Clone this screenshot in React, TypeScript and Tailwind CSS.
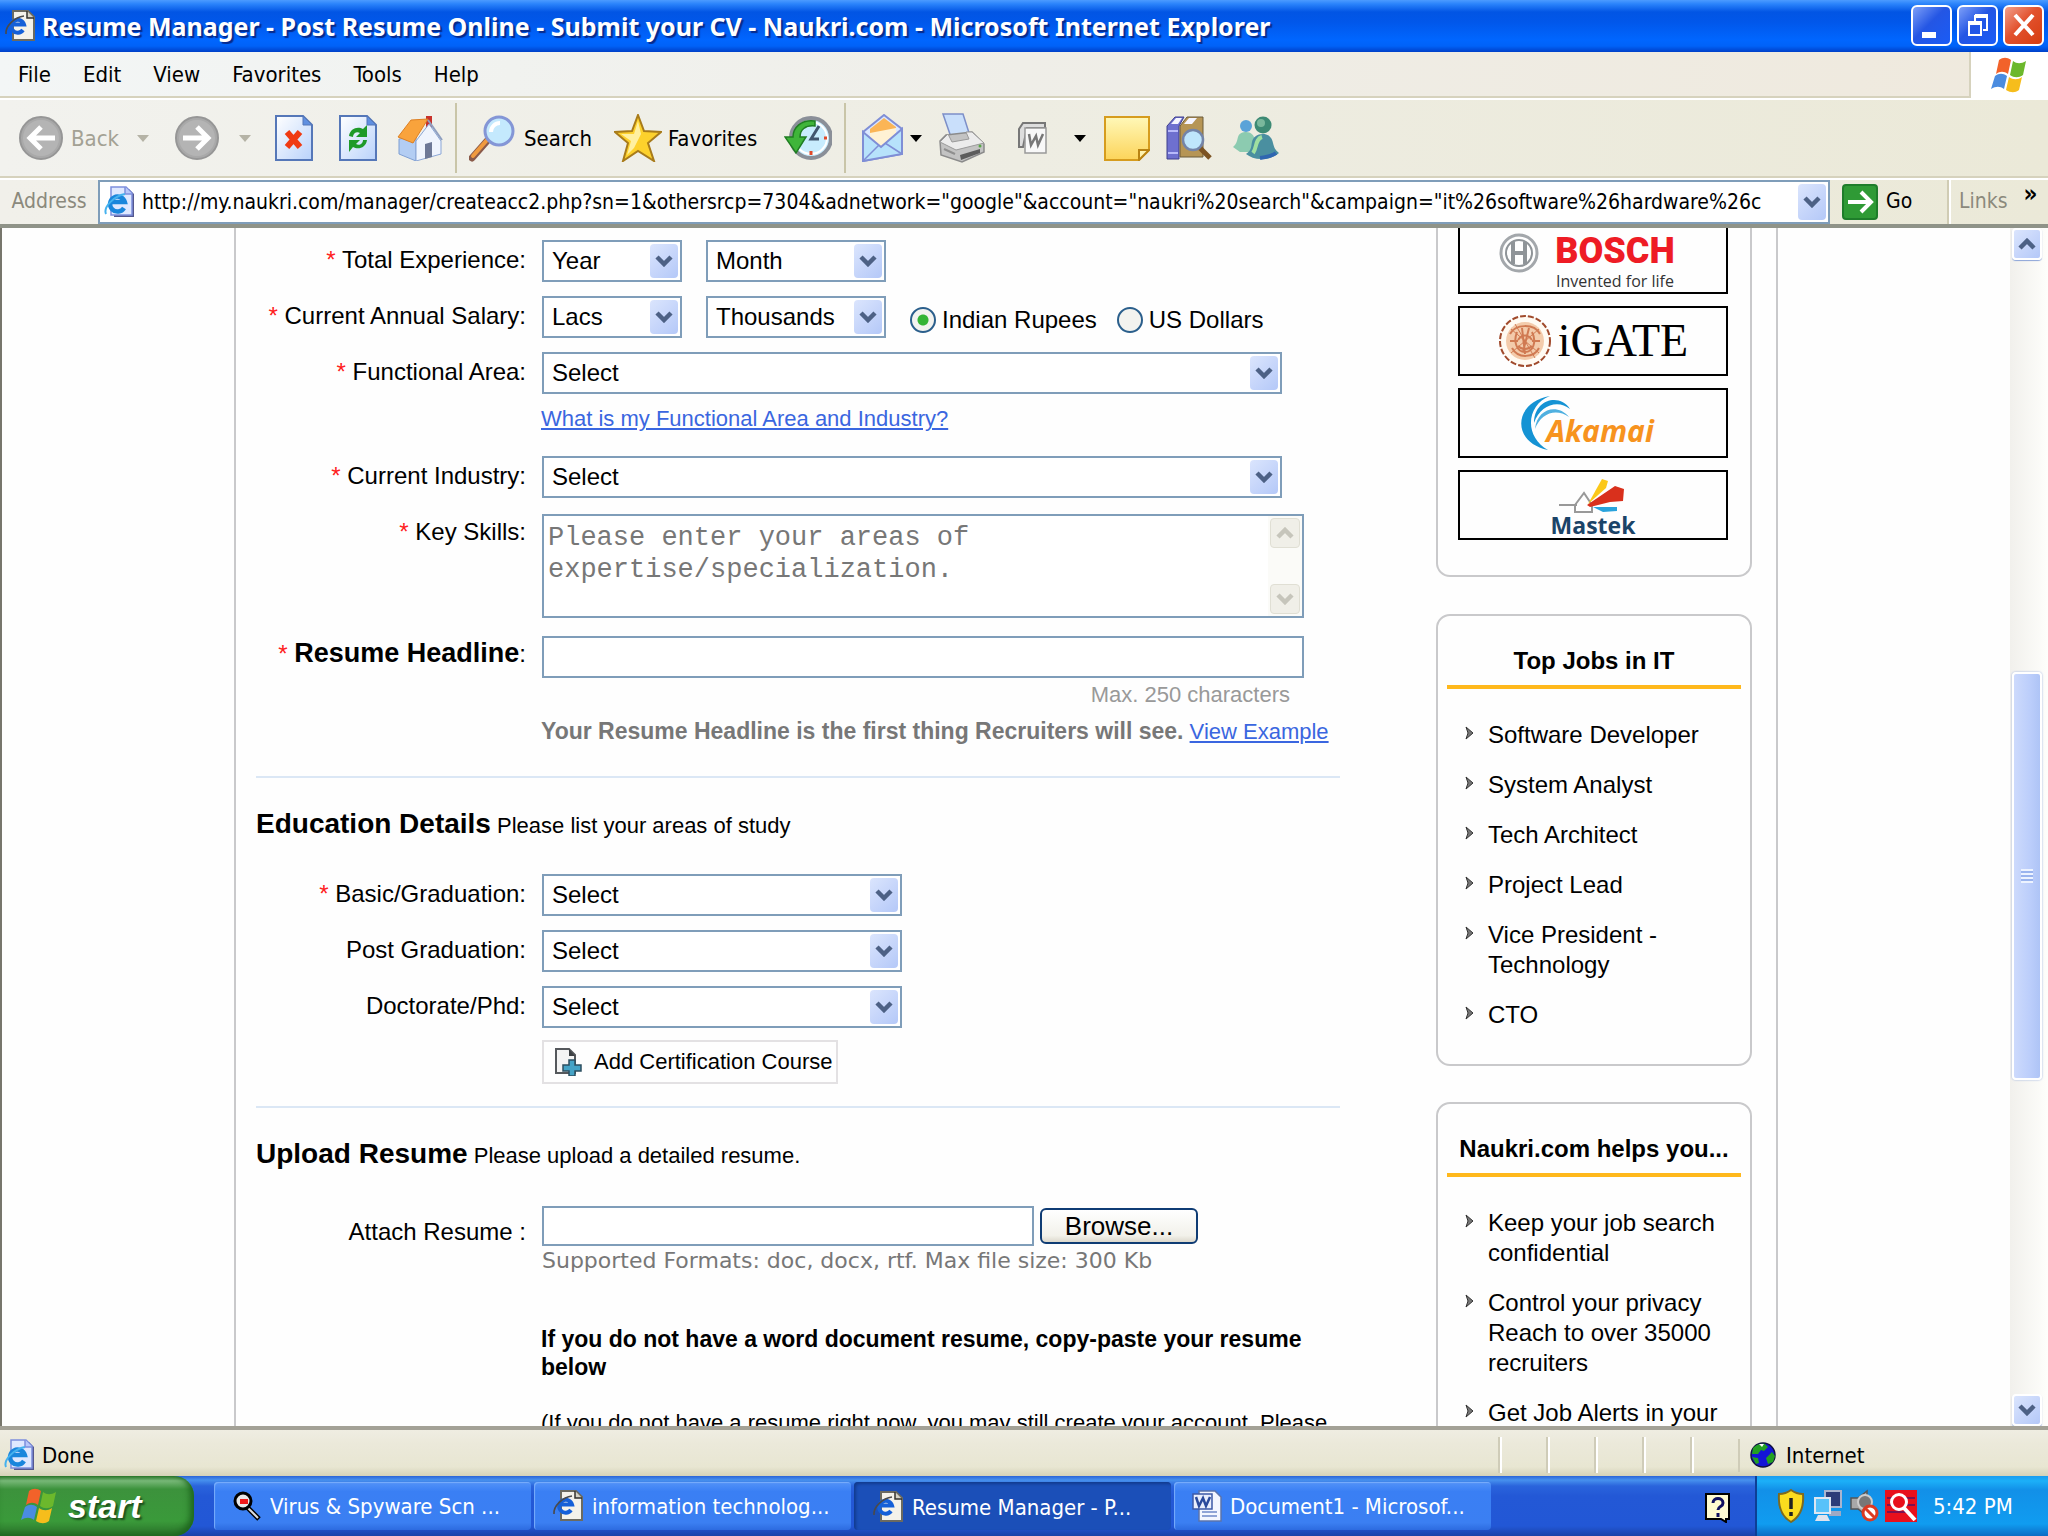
import type { ReactNode } from "react";

const TOP_JOBS = ["Software Developer", "System Analyst", "Tech Architect", "Project Lead", "Vice President - Technology", "CTO"];

const HELPS = ["Keep your job search confidential", "Control your privacy Reach to over 35000 recruiters", "Get Job Alerts in your inbox"];

const URL =
  'http://my.naukri.com/manager/createacc2.php?sn=1&othersrcp=7304&adnetwork="google"&account="naukri%20search"&campaign="it%26software%26hardware%26c';

/* ---------- icons ---------- */

function PageIcon({ className }: { className?: string }) {
  return (
    <svg viewBox="0 0 32 32" className={className} aria-hidden="true">
      <path d="M9 1h15l6 6v23H9z" fill="#f4f2ea" stroke="#6b6a60" strokeWidth="2" />
      <path d="M23 1v7h7" fill="#d5d2c4" stroke="#33322c" strokeWidth="1.5" />
      <path d="M19 20A6.500 6.500 0 1 1 20 14.500H8" fill="none" stroke="#1560d8" strokeWidth="4" />
      <path d="M2 24c-1-8 9-17 18-18" fill="none" stroke="#4a4a4a" strokeWidth="1.600" />
    </svg>
  );
}

function BluePageIcon({ className }: { className?: string }) {
  return (
    <svg viewBox="0 0 32 32" className={className} aria-hidden="true">
      <path d="M10 3h15l5 5v23H10z" fill="#54588f" />
      <path d="M7 1h15l6 6v22H7z" fill="#dfe8ff" stroke="#7d8fdd" strokeWidth="1.500" />
      <path d="M21 1v7h7" fill="#b9c8fa" stroke="#7d8fdd" strokeWidth="1.500" />
      <path d="M20 22a7.500 7.500 0 1 1 .8-6H8" fill="none" stroke="#1a86dc" strokeWidth="4.500" />
      <path d="M2 28c-3-7 8-18 19-20" fill="none" stroke="#45b2ee" strokeWidth="2" />
    </svg>
  );
}

function FlagIcon({ className }: { className?: string }) {
  return (
    <svg viewBox="0 0 40 36" className={className} aria-hidden="true">
      <path d="M9 3c4-3 8-3 12 0l-3 14c-4-3-8-3-12 0z" fill="#f2622a" />
      <path d="M23 4c4 3 8 3 13 0l-3 14c-4 3-9 3-13 0z" fill="#6cb82c" />
      <path d="M5 19c4-3 8-3 12 0l-3 13c-4-3-8-3-13 0z" fill="#4a8ce0" />
      <path d="M19 20c4 3 9 3 13 0l-3 13c-4 3-8 3-13 0z" fill="#f6bd1c" />
    </svg>
  );
}

function RoundArrow({ flip }: { flip?: boolean }) {
  return (
    <svg viewBox="0 0 44 44" className={flip ? "size-11 rotate-180" : "size-11"} aria-hidden="true">
      <circle cx="22" cy="22" r="21" fill="#a9a9a9" stroke="#969696" strokeWidth="2" />
      <circle cx="22" cy="22" r="18" fill="#b4b4b4" />
      <path d="M36 22H12M22 11 11 22l11 11" fill="none" stroke="#fff" strokeWidth="5" />
    </svg>
  );
}

function Caret({ className }: { className?: string }) {
  return (
    <svg viewBox="0 0 12 7" className={className} aria-hidden="true">
      <path d="M0 0h12L6 7z" fill="currentColor" />
    </svg>
  );
}

function SheetBase({ children }: { children: ReactNode }) {
  return (
    <svg viewBox="0 0 38 46" className="h-[46px] w-[38px]" aria-hidden="true">
      <defs>
        <linearGradient id="sheet" x1="0" y1="0" x2="1" y2="1">
          <stop offset="0" stopColor="#fff" />
          <stop offset="1" stopColor="#b9d2fb" />
        </linearGradient>
      </defs>
      <path d="M1 1h27l9 9v35H1z" fill="url(#sheet)" stroke="#5577b8" strokeWidth="2" />
      <path d="M28 1v9h9z" fill="#5f8fe0" stroke="#5577b8" strokeWidth="1" />
      {children}
    </svg>
  );
}

function HomeIcon() {
  return (
    <svg viewBox="0 0 46 46" className="size-[46px]" aria-hidden="true">
      <path d="M29 1h6v14h-6z" fill="#c8322b" />
      <path d="M2 24v15l17 7V22z" fill="#b3cdf3" stroke="#7f9fd2" />
      <path d="M19 26 32 9l12 17v13l-25 7z" fill="#eff4fd" stroke="#8aa6d6" />
      <path d="M28 29l7-2v15l-7 2z" fill="#6d7896" />
      <path d="M14 5 31 4 16 28 1 22z" fill="#f9a33c" stroke="#dd7f22" />
      <path d="M31 5l14 20" stroke="#8f9fc0" strokeWidth="2" />
    </svg>
  );
}

function SearchIcon() {
  return (
    <svg viewBox="0 0 47 47" className="size-[47px]" aria-hidden="true">
      <path d="M3 43 18 26" stroke="#8a5a4a" strokeWidth="7" strokeLinecap="round" />
      <path d="M4 41 18 25" stroke="#f09a3e" strokeWidth="4" strokeLinecap="round" />
      <circle cx="30" cy="16" r="14" fill="#c4e9fd" stroke="#8496d6" strokeWidth="3" />
      <path d="M22 17a9 9 0 0 1 9-9" fill="none" stroke="#fff" strokeWidth="4" />
    </svg>
  );
}

function StarIcon() {
  return (
    <svg viewBox="0 0 48 48" className="size-12" aria-hidden="true">
      <path d="M24 1l6 16 17 1-13 11 6 18-16-10L9 47l5-18L1 18l17-1z" fill="#fdd12c" stroke="#a87b1a" strokeWidth="2" />
      <path d="M24 7l3 13-7 14-7 7 4-14L7 20l13 0z" fill="#fff0a0" />
    </svg>
  );
}

function HistoryIcon() {
  return (
    <svg viewBox="0 0 48 46" className="h-[46px] w-12" aria-hidden="true">
      <circle cx="27" cy="23" r="20" fill="#c8ecfd" stroke="#8a8f98" strokeWidth="4" />
      <circle cx="27" cy="23" r="16" fill="none" stroke="#fff" strokeWidth="2" />
      <path d="M35 11 27 24h8" fill="none" stroke="#42566e" strokeWidth="3" />
      <path d="M27 36v4M40 23h3" stroke="#e04a2a" strokeWidth="3" />
      <path d="M31 6C17 4 9 13 9 22H1l11 16 10-16h-6c0-7 5-12 15-11z" fill="#3fb53a" stroke="#1f7d22" strokeWidth="1.500" />
    </svg>
  );
}

function MailIcon() {
  return (
    <svg viewBox="0 0 42 48" className="h-12 w-[42px]" aria-hidden="true">
      <path d="M1 18 22 1l18 14v25L1 47z" fill="#dbe8ff" stroke="#7f8ed6" strokeWidth="2" />
      <path d="M8 15 22 4l12 9v14L8 30z" fill="#fbb556" />
      <path d="M8 19l26-5v14L20 34 8 28z" fill="#fff2d4" />
      <path d="M1 18l18 15 21-18v25L1 47z" fill="#b7e2fb" stroke="#7f8ed6" strokeWidth="2" />
      <path d="M1 47l16-16M40 40 23 29" stroke="#7f8ed6" strokeWidth="1.500" />
    </svg>
  );
}

function PrinterIcon() {
  return (
    <svg viewBox="0 0 48 50" className="h-[50px] w-12" aria-hidden="true">
      <path d="M5 1h20l7 22-18 4z" fill="#c9dffb" stroke="#7d8fc8" strokeWidth="1.500" />
      <path d="M2 28l6-6 26-3 12 12v8L24 49 3 42z" fill="#c3c3c3" stroke="#8b8b8b" strokeWidth="1.500" />
      <path d="M2 29l16 8 28-7-12-11-6 0 3 7-17 3-4-8z" fill="#ececec" stroke="#9a9a9a" />
      <path d="M22 42l20-6v4l-19 7z" fill="#5c5c5c" />
      <path d="M6 36l11 5" stroke="#8f8f8f" strokeWidth="2" />
      <circle cx="42" cy="33" r="1.500" fill="#58a846" />
    </svg>
  );
}

function WordEditIcon() {
  return (
    <svg viewBox="0 0 34 34" className="size-[34px]" aria-hidden="true">
      <path d="M7 2h22v5H11L7 26H3V8z" fill="#ddd" stroke="#777" strokeWidth="2" />
      <path d="M9 7h21v25H9z" fill="#f8f8f8" stroke="#999" strokeWidth="1.500" />
      <path d="M13 13l2 11 5-9 2 9 5-11" fill="none" stroke="#777" strokeWidth="2.500" />
    </svg>
  );
}

function NoteIcon() {
  return (
    <svg viewBox="0 0 46 46" className="size-[46px]" aria-hidden="true">
      <defs>
        <linearGradient id="note" x1="0" y1="0" x2="0" y2="1">
          <stop offset="0" stopColor="#fff8b8" />
          <stop offset="1" stopColor="#fcd45a" />
        </linearGradient>
      </defs>
      <path d="M1 2h44v33l-10 10H1z" fill="url(#note)" stroke="#d69c1e" strokeWidth="2" />
      <path d="M45 35H35v10z" fill="#fff3b0" stroke="#b98312" strokeWidth="2" />
    </svg>
  );
}

function ResearchIcon() {
  return (
    <svg viewBox="0 0 46 46" className="size-[46px]" aria-hidden="true">
      <path d="M1 11 9 2h9l-5 9v33H1z" fill="#6e70cf" stroke="#3f3f8c" />
      <path d="M14 11l7-9h16v40H14z" fill="#b69555" stroke="#6b5a3a" />
      <path d="M5 9l5-6h6l-4 6zM18 9l5-6h8l-5 6z" fill="#f5f5ff" />
      <path d="M2 16h10M2 38h10" stroke="#b8bafa" strokeWidth="2" />
      <path d="M33 32l11 11" stroke="#7c5322" strokeWidth="5" />
      <circle cx="27" cy="25" r="10" fill="#bfe6fc" stroke="#7484a8" strokeWidth="2.500" />
    </svg>
  );
}

function MessengerIcon() {
  return (
    <svg viewBox="0 0 48 44" className="h-11 w-12" aria-hidden="true">
      <circle cx="14" cy="10" r="6" fill="#5aa3d8" />
      <path d="M1 31c4-3 4-7 5-10 1-4 5-5 8-5 5 0 8 3 9 8l-4 12H8z" fill="#8ccbb0" />
      <circle cx="31" cy="9" r="8.500" fill="#3d8a74" />
      <circle cx="29" cy="7" r="4" fill="#7ab89c" />
      <path d="M14 38c6-4 5-8 6-12 1-5 5-8 11-8s9 4 10 9c1 4 2 7 6 10-6 5-12 6-18 6s-11-2-15-5z" fill="#4a8fa0" />
      <path d="M21 37c4-5 2-14 9-16" stroke="#9fe0a0" strokeWidth="4" fill="none" />
      <path d="M28 42c7-1 12-2 16-5" stroke="#2f66b0" strokeWidth="4" fill="none" />
    </svg>
  );
}

function Chevron({ up, className }: { up?: boolean; className?: string }) {
  return (
    <svg viewBox="0 0 18 12" className={className} aria-hidden="true">
      <path d={up ? "M2 10l7-7 7 7" : "M2 2l7 7 7-7"} fill="none" stroke="currentColor" strokeWidth="4.500" />
    </svg>
  );
}

function AddPageIcon() {
  return (
    <svg viewBox="0 0 28 28" className="size-7" aria-hidden="true">
      <path d="M2 1h13l6 6v18H2z" fill="#f4f4f4" stroke="#55585c" strokeWidth="2" />
      <path d="M15 1v7h6z" fill="#3d4044" />
      <path d="M15 12h6v5h6v6h-6v5h-6v-5H9v-6h6z" fill="#45a3c6" stroke="#2d4f60" strokeWidth="1.500" />
    </svg>
  );
}

function BulletIcon() {
  return (
    <svg viewBox="0 0 9 14" className="mt-1.5 h-3.5 w-[9px] shrink-0" aria-hidden="true">
      <path d="M1 1l7 6-7 6 2-6z" fill="#777" stroke="#333" />
    </svg>
  );
}

function SpyIcon() {
  return (
    <svg viewBox="0 0 30 30" className="size-[30px]" aria-hidden="true">
      <path d="M15 16l12 12" stroke="#000" strokeWidth="5" />
      <path d="M15 16l11 11" stroke="#ddd" strokeWidth="2" />
      <circle cx="11" cy="10" r="8" fill="#e8e8e8" stroke="#000" strokeWidth="3" />
      <path d="M8 8h8v5H8z" fill="#f01818" />
    </svg>
  );
}

function WordDocIcon() {
  return (
    <svg viewBox="0 0 30 32" className="h-8 w-[30px]" aria-hidden="true">
      <path d="M7 1h16l6 6v24H7z" fill="#f3f6ff" stroke="#5b74ad" strokeWidth="1.500" />
      <path d="M10 22h15M10 26h15" stroke="#8fa4d6" strokeWidth="2" />
      <path d="M1 4h19v15H1z" fill="#e9eefc" stroke="#3d5aa6" strokeWidth="1.500" />
      <path d="M4 7l3 9 4-8 3 8 4-9" fill="none" stroke="#2a4a9c" strokeWidth="2.500" />
    </svg>
  );
}

function GlobeIcon() {
  return (
    <svg viewBox="0 0 26 26" className="size-[26px]" aria-hidden="true">
      <circle cx="13" cy="13" r="12" fill="#1414d8" stroke="#101040" strokeWidth="1.500" />
      <path d="M3 6c3-4 9-5 12-4l3 3-4 4-3-1-3 4-6 0zM16 16l6-6 3 4-2 6-5 2zM2 15l6 1 1 5-3 1z" fill="#22a022" />
      <path d="M9 2l5 0-2 3z" fill="#fff" />
    </svg>
  );
}

/* ---------- browser chrome ---------- */

function TitleBar() {
  const button = "flex size-[41px] items-center justify-center rounded-md border-2 border-white";
  return (
    <header className="flex h-[52px] shrink-0 items-center bg-[linear-gradient(#4c9bff_0,#2a83fb_4px,#0255e4_12px,#0157ea_22px,#0066ff_40px,#0062f8_46px,#0040c8_52px)] pr-1 pl-1">
      <PageIcon className="size-8" />
      <h1 className="ml-1.5 grow truncate font-['Noto_Sans',sans-serif] text-[25px] leading-9 font-bold text-white [text-shadow:2px_2px_1px_#062a8c]">
        Resume Manager - Post Resume Online - Submit your CV - Naukri.com - Microsoft Internet Explorer
      </h1>
      <div className="flex gap-[5px] pb-0.5">
        <button aria-label="Minimize" className={`${button} bg-[linear-gradient(135deg,#7d9ff8,#2456e4_45%,#1a5cf6)]`}>
          <svg viewBox="0 0 36 36" className="size-9">
            <path d="M8 25h14v6H8z" fill="#fff" />
          </svg>
        </button>
        <button aria-label="Restore" className={`${button} bg-[linear-gradient(135deg,#7d9ff8,#2456e4_45%,#1a5cf6)]`}>
          <svg viewBox="0 0 36 36" className="size-9" fill="none" stroke="#fff">
            <path d="M9 17h12v11H9z" strokeWidth="2" />
            <path d="M8 16h14M15 9h13" strokeWidth="4" />
            <path d="M15 8v6M27 9v14h-4" strokeWidth="2" />
          </svg>
        </button>
        <button aria-label="Close" className={`${button} bg-[linear-gradient(135deg,#f2a08c,#e2522e_45%,#d63c10)]`}>
          <svg viewBox="0 0 36 36" className="size-9">
            <path d="M9 8l18 20M27 8 9 28" stroke="#fff" strokeWidth="4" />
          </svg>
        </button>
      </div>
    </header>
  );
}

function MenuBar() {
  return (
    <div className="flex h-[48px] shrink-0 border-b-2 border-white bg-[linear-gradient(90deg,#f3f6f6,#efeee8_50%,#efe9dd)]">
      <nav className="flex grow items-center gap-8 border-b-2 border-[#d6d2bd] pl-[18px]">
        {["File", "Edit", "View", "Favorites", "Tools", "Help"].map((item) => (
          <button key={item}>{item}</button>
        ))}
      </nav>
      <div className="flex w-[79px] items-center justify-center border-l-2 border-[#d6d2bd] bg-white">
        <FlagIcon className="h-9 w-10" />
      </div>
    </div>
  );
}

function ToolBar() {
  return (
    <div className="flex h-20 shrink-0 items-center border-b-2 border-white bg-[linear-gradient(90deg,#f2f2ee,#eeede3_50%,#ebe9d8)] pb-0.5 pl-[19px] shadow-[inset_0_-2px_0_#d6d2bd]">
      <button className="flex items-center gap-2 text-[#a3a194]">
        <RoundArrow />
        <span className="w-[56px] text-left">Back</span>
      </button>
      <Caret className="ml-2.5 h-[7px] w-3 text-[#b5b3a6]" />
      <button aria-label="Forward" className="ml-[26px]">
        <RoundArrow flip />
      </button>
      <Caret className="ml-5 h-[7px] w-3 text-[#b5b3a6]" />
      <button aria-label="Stop" className="ml-6">
        <SheetBase>
          <path d="M12 17l13 15M25 17 12 32" stroke="#f03a12" strokeWidth="6" />
        </SheetBase>
      </button>
      <button aria-label="Refresh" className="ml-[26px]">
        <SheetBase>
          <path d="M10 21c1-8 9-10 14-7l4-4v12H17l4-4c-3-2-7 0-7 4zM28 25c-1 8-9 10-14 7l-4 5V25h11l-4 4c3 2 7 0 7-4z" fill="#1f9a28" />
        </SheetBase>
      </button>
      <button aria-label="Home" className="ml-5">
        <HomeIcon />
      </button>
      <div className="ml-3 h-[70px] w-0.5 bg-[#c9c5a8]" />
      <button className="ml-3 flex items-center gap-2">
        <SearchIcon />
        <span className="w-[72px] text-left">Search</span>
      </button>
      <button className="ml-[18px] flex items-center gap-1.5">
        <StarIcon />
        <span className="w-[96px] text-left">Favorites</span>
      </button>
      <button aria-label="History" className="ml-5">
        <HistoryIcon />
      </button>
      <div className="ml-3 h-[70px] w-0.5 bg-[#c9c5a8]" />
      <button aria-label="Mail" className="ml-4 flex items-center gap-1.5">
        <MailIcon />
        <Caret className="h-[7px] w-3" />
      </button>
      <button aria-label="Print" className="ml-4">
        <PrinterIcon />
      </button>
      <button aria-label="Edit with Word" className="ml-[30px] flex items-center gap-6">
        <WordEditIcon />
        <Caret className="h-[7px] w-3" />
      </button>
      <button aria-label="Discuss" className="ml-[18px]">
        <NoteIcon />
      </button>
      <button aria-label="Research" className="ml-4">
        <ResearchIcon />
      </button>
      <button aria-label="Messenger" className="ml-5">
        <MessengerIcon />
      </button>
    </div>
  );
}

function DropButton() {
  return (
    <span className="pointer-events-none flex w-7 items-center justify-center rounded-sm bg-[linear-gradient(135deg,#dbe5fd,#b4c8f8)] text-[#4d6185]">
      <Chevron className="h-3 w-[18px]" />
    </span>
  );
}

function AddressBar() {
  return (
    <form className="flex h-[48px] shrink-0 items-stretch border-b-4 border-[#8f9388] bg-[linear-gradient(90deg,#f1f0ea,#eeede3_50%,#ebe9d8)] text-[21px]">
      <label htmlFor="address" className="flex w-[98px] items-center justify-center text-[#8b897c]">
        Address
      </label>
      <div className="flex min-w-0 grow items-stretch border-2 border-[#7f9db9] bg-white p-0.5">
        <BluePageIcon className="ml-0.5 h-9 w-8 self-center" />
        <input id="address" defaultValue={URL} className="ml-1.5 min-w-0 grow bg-transparent pt-0.5 outline-none" />
        <button type="button" aria-label="Show addresses" className="flex">
          <DropButton />
        </button>
      </div>
      <button type="button" className="flex w-[119px] items-center gap-2 border-r-2 border-[#d0ccb4] pl-3">
        <svg viewBox="0 0 36 36" className="size-9" aria-hidden="true">
          <rect x="1" y="1" width="34" height="34" rx="3" fill="#2f9a35" stroke="#1e7d2a" strokeWidth="2" />
          <path d="M6 18h22M19 8l10 10-10 10" fill="none" stroke="#fff" strokeWidth="4" />
        </svg>
        Go
      </button>
      <button type="button" className="flex w-[99px] items-center border-l-2 border-white pl-2 text-[#8b897c]">
        Links
        <span className="ml-4 pb-4 text-2xl font-bold text-black">»</span>
      </button>
    </form>
  );
}

function ScrollBar() {
  const cap = "flex h-8 shrink-0 items-center justify-center rounded-sm border-2 border-white bg-[linear-gradient(135deg,#dbe5fd,#b4c8f8)] text-[#4d6185] shadow-[0_1px_1px_#8ba4d8]";
  return (
    <div className="flex w-[38px] shrink-0 flex-col bg-[linear-gradient(90deg,#f1f0ec,#fefefb)] pr-1.5 pl-0.5">
      <button aria-label="Scroll up" className={cap}>
        <Chevron up className="h-3 w-[18px]" />
      </button>
      <div className="grow-[413] basis-0" />
      <div className="flex grow-[405] basis-0 items-center justify-center rounded-sm border-2 border-white bg-[linear-gradient(90deg,#cddafc,#bccefb_60%,#aec4f6)] shadow-[0_0_2px_#8ba4d8]">
        <span className="h-3.5 w-3 bg-[repeating-linear-gradient(#edf3ff_0_2px,#9ab4ee_2px_4px)]" />
      </div>
      <div className="grow-[315] basis-0" />
      <button aria-label="Scroll down" className={cap}>
        <Chevron className="h-3 w-[18px]" />
      </button>
    </div>
  );
}

function StatusBar() {
  return (
    <footer className="flex h-[50px] shrink-0 items-center border-t-4 border-[#a3a196] bg-[linear-gradient(#efede2,#ebe9da_30%,#e8e6d2_80%,#d5d2b8)] pt-1">
      <BluePageIcon className="ml-1 size-8" />
      <span className="ml-1.5 grow">Done</span>
      {[1, 2, 3, 4, 5].map((n) => (
        <span key={n} className="h-9 w-12 border-l-2 border-[#cfccb8] shadow-[inset_2px_0_0_#fff]" />
      ))}
      <span className="flex w-[310px] items-center gap-2.5 border-l-2 border-[#cfccb8] pl-2.5">
        <GlobeIcon />
        Internet
      </span>
    </footer>
  );
}

function TaskButton({ icon, children, active }: { icon: ReactNode; children: ReactNode; active?: boolean }) {
  return (
    <button
      className={`mt-1.5 flex h-[48px] w-[317px] min-w-0 items-center gap-2 rounded-sm pl-[18px] ${
        active
          ? "bg-[#1b4fb8] pt-0.5 shadow-[inset_2px_2px_3px_#123a8e]"
          : "bg-[linear-gradient(#5393f8,#3a7ff4_20%,#3b7ff2_85%,#2d6be0)] shadow-[inset_1px_1px_1px_#7aaefb]"
      }`}
    >
      {icon}
      <span className="truncate">{children}</span>
    </button>
  );
}

function TaskBar() {
  return (
    <div className="flex h-[60px] shrink-0 items-start bg-[linear-gradient(#2a64d8_0,#4791ee_4px,#2a64dc_10px,#2358d6_20px,#2257d6_50px,#1a42a8_60px)] text-white">
      <button className="flex h-[60px] w-[194px] items-center gap-2 rounded-r-[20px] bg-[linear-gradient(#2f7c2f,#78b878_8%,#3c923c_22%,#3a9a3a_75%,#2a722a)] pl-5 shadow-[inset_-4px_-2px_6px_#1e661e]">
        <FlagIcon className="size-10" />
        <span className="font-['Liberation_Sans',sans-serif] text-[34px] leading-10 font-bold italic [text-shadow:2px_2px_2px_#1c4d1c]">start</span>
      </button>
      <div className="flex min-w-0 grow gap-[3px] pl-5">
        <TaskButton icon={<SpyIcon />}>Virus &amp; Spyware Scn ...</TaskButton>
        <TaskButton icon={<PageIcon className="size-8" />}>information technolog...</TaskButton>
        <TaskButton active icon={<PageIcon className="size-8" />}>
          Resume Manager - P...
        </TaskButton>
        <TaskButton icon={<WordDocIcon />}>Document1 - Microsof...</TaskButton>
      </div>
      <svg viewBox="0 0 26 30" className="mt-[17px] mr-6 h-[30px] w-[26px]" role="img" aria-label="Help">
        <path d="M1 1h23v25h-3v3l-5-3H1z" fill="#fffbd0" stroke="#000" strokeWidth="2" />
        <path d="M8 10c0-6 10-6 10 0 0 4-5 3-5 7M13 20v4" fill="none" stroke="#101060" strokeWidth="3" />
      </svg>
      <div className="flex h-[60px] w-[293px] items-center border-l-2 border-[#0d3f96] bg-[linear-gradient(#1a9cf0_0,#1cb0f8_5px,#1290e8_14px,#109cf0_48px,#0c6cc4_60px)] pl-5">
        <svg viewBox="0 0 28 34" className="h-9 w-7" aria-hidden="true">
          <path d="M14 1c4 3 8 4 12 4 1 13-2 22-12 28C4 27 1 18 2 5c4 0 8-1 12-4z" fill="#fbdc1e" stroke="#7d6a20" strokeWidth="2" />
          <path d="M14 9v11M14 23v4" stroke="#222" strokeWidth="3.500" />
        </svg>
        <svg viewBox="0 0 30 34" className="ml-2 h-9 w-[30px]" aria-hidden="true">
          <path d="M12 2h16v16H12z" fill="#2d3c78" stroke="#a9b4cf" strokeWidth="2" />
          <path d="M16 22h12v5H16z" fill="#9fa9c4" />
          <path d="M2 9h15v15H2z" fill="#58c2fa" stroke="#dde6f2" strokeWidth="2" />
          <path d="M5 26h9l3 6H2z" fill="#dfe3ee" />
        </svg>
        <svg viewBox="0 0 30 34" className="ml-1.5 h-9 w-[30px]" aria-hidden="true">
          <path d="M2 9h7l9-7v25l-9-7H2z" fill="#a8a8a8" stroke="#555" strokeWidth="1.500" />
          <circle cx="16" cy="13" r="7" fill="#777" stroke="#ccc" strokeWidth="2" />
          <circle cx="21" cy="24" r="7" fill="#fff" stroke="#dc3a22" strokeWidth="3" />
          <path d="M16 19l10 10" stroke="#dc3a22" strokeWidth="3" />
        </svg>
        <svg viewBox="0 0 32 32" className="ml-1.5 size-8" aria-hidden="true">
          <path d="M0 0h32v32H0z" fill="#e8101c" />
          <path d="M2 8h28M2 15h28M2 22h22" stroke="#5a1060" strokeWidth="1.500" />
          <circle cx="14" cy="12" r="7.500" fill="#e8101c" stroke="#fff" strokeWidth="3" />
          <path d="M19 18l11 12" stroke="#fff" strokeWidth="4" />
        </svg>
        <time className="ml-4">5:42 PM</time>
      </div>
    </div>
  );
}

/* ---------- form ---------- */

function Row({ label, id, required, className, labelClass, children }: {
  label: ReactNode;
  id?: string;
  required?: boolean;
  className: string;
  labelClass?: string;
  children: ReactNode;
}) {
  return (
    <div className={`grid grid-cols-[270px_1fr] gap-4 ${className}`}>
      <label htmlFor={id} className={`text-right whitespace-nowrap ${labelClass ?? "self-center pb-0.5"}`}>
        {required && <span className="text-[#ff2020]">* </span>}
        {label}
      </label>
      {children}
    </div>
  );
}

function SelectBox({ id, value, className, label }: { id: string; value: string; className: string; label?: string }) {
  return (
    <div className={`relative h-[42px] ${className}`}>
      <select id={id} aria-label={label} className="h-full w-full appearance-none border-2 border-[#7f9db9] bg-white pl-2 outline-none">
        <option>{value}</option>
      </select>
      <span className="pointer-events-none absolute inset-y-1 right-1 flex">
        <DropButton />
      </span>
    </div>
  );
}

const radio =
  "size-[26px] appearance-none rounded-full border-2 border-[#2b5f8c] bg-[#f3f3ef] checked:bg-[radial-gradient(circle,#35b535_0_5px,#f3f3ef_6px)]";
const field = "w-full border-2 border-[#7f9db9] bg-white outline-none";

function ResumeForm() {
  return (
    <form className="w-[1084px] pt-3">
      <Row label="Total Experience:" id="years" required className="">
        <div className="flex gap-6">
          <SelectBox id="years" value="Year" className="w-[140px]" />
          <SelectBox id="months" label="Months" value="Month" className="w-[180px]" />
        </div>
      </Row>
      <Row label="Current Annual Salary:" id="lacs" required className="mt-3.5">
        <div className="flex gap-6">
          <SelectBox id="lacs" value="Lacs" className="w-[140px]" />
          <SelectBox id="thousands" label="Thousands" value="Thousands" className="w-[180px]" />
          <div className="flex items-center gap-5 pt-1.5">
            <label className="flex items-center gap-1.5">
              <input type="radio" name="currency" defaultChecked className={radio} />
              Indian Rupees
            </label>
            <label className="flex items-center gap-1.5">
              <input type="radio" name="currency" className={radio} />
              US Dollars
            </label>
          </div>
        </div>
      </Row>
      <Row label="Functional Area:" id="area" required className="mt-3.5">
        <SelectBox id="area" value="Select" className="w-[740px]" />
      </Row>
      <a href="#area" className="mt-[11px] ml-[285px] block w-fit text-[22px] leading-7 text-[#3a66e0] underline">
        What is my Functional Area and Industry?
      </a>
      <Row label="Current Industry:" id="industry" required className="mt-[23px]">
        <SelectBox id="industry" value="Select" className="w-[740px]" />
      </Row>
      <Row label="Key Skills:" id="skills" required className="mt-4" labelClass="self-start pt-0.5">
        <div className="relative h-[104px] w-[762px]">
          <textarea
            id="skills"
            defaultValue="Please enter your areas of expertise/specialization."
            className={`${field} h-full resize-none overflow-hidden pt-1.5 pr-10 pl-1 font-['Liberation_Mono',monospace] text-[27px] leading-8 text-[#777]`}
          />
          <div className="absolute inset-y-0.5 right-0.5 flex w-[34px] flex-col justify-between bg-[#fbfbf8] p-0.5 text-[#c6c5bb]">
            <button type="button" aria-label="Scroll up" className="flex h-[30px] items-center justify-center rounded-sm border border-[#e0dfd4] bg-[#f0efe8]">
              <Chevron up className="h-3 w-[18px]" />
            </button>
            <button type="button" aria-label="Scroll down" className="flex h-[30px] items-center justify-center rounded-sm border border-[#e0dfd4] bg-[#f0efe8]">
              <Chevron className="h-3 w-[18px]" />
            </button>
          </div>
        </div>
      </Row>
      <Row
        label={
          <>
            <b className="text-[27px]">Resume Headline</b>:
          </>
        }
        id="headline"
        required
        className="mt-[18px]"
        labelClass="self-center pb-2"
      >
        <div className="w-[762px]">
          <input id="headline" className={`${field} block h-[42px]`} />
        </div>
      </Row>
      <p className="mt-px mr-[50px] text-right text-[22px] leading-7 text-[#999]">Max. 250 characters</p>
      <p className="mt-2 ml-[285px] text-[22px] leading-7 whitespace-nowrap text-[#777]">
        <b className="text-[23px]">Your Resume Headline is the first thing Recruiters will see.</b>{" "}
        <a href="#headline" className="text-[#3a66e0] underline">
          View Example
        </a>
      </p>

      <hr className="mt-[30px] border-t-2 border-[#dbe7f5]" />
      <h2 className="mt-7 text-[22px] leading-9">
        <b className="text-[28px]">Education Details</b> Please list your areas of study
      </h2>
      <Row label="Basic/Graduation:" id="basic" required className="mt-[30px]">
        <SelectBox id="basic" value="Select" className="w-[360px]" />
      </Row>
      <Row label="Post Graduation:" id="post" className="mt-3.5">
        <SelectBox id="post" value="Select" className="w-[360px]" />
      </Row>
      <Row label="Doctorate/Phd:" id="phd" className="mt-3.5">
        <SelectBox id="phd" value="Select" className="w-[360px]" />
      </Row>
      <button type="button" className="mt-3 ml-[286px] flex h-11 w-[296px] items-center gap-3 border-2 border-[#e3e1e3] pl-2.5 text-[22px]">
        <AddPageIcon />
        Add Certification Course
      </button>

      <hr className="mt-[22px] border-t-2 border-[#dbe7f5]" />
      <h2 className="mt-7 text-[22px] leading-9">
        <b className="text-[28px]">Upload Resume</b> Please upload a detailed resume.
      </h2>
      <Row label="Attach Resume :" id="attach" className="mt-8" labelClass="self-start pt-3 leading-7">
        <div className="flex items-center gap-1.5">
          <div className="w-[492px]">
            <input id="attach" className={`${field} block h-10`} />
          </div>
          <button type="button" className="h-9 w-[158px] rounded-md border-2 border-[#0f3c74] bg-[linear-gradient(#fff,#f2f1ea_80%,#dcd8cc)] text-[26px] leading-8">
            Browse...
          </button>
        </div>
      </Row>
      <p className="mt-px ml-[286px] font-['DejaVu_Sans',sans-serif] text-[22px] leading-7 text-[#777]">Supported Formats: doc, docx, rtf. Max file size: 300 Kb</p>
      <p className="mt-[50px] ml-[285px] text-[23px] leading-7 font-bold">If you do not have a word document resume, copy-paste your resume below</p>
      <p className="mt-7 ml-[285px] text-[22px] leading-7 whitespace-nowrap">(If you do not have a resume right now, you may still create your account. Please</p>
    </form>
  );
}

/* ---------- sidebar ---------- */

function LogoBox({ children }: { children: ReactNode }) {
  return <div className="flex h-[70px] items-center justify-center border-2 border-black">{children}</div>;
}

function EmployerLogos() {
  return (
    <section className="-mt-1 flex h-[353px] flex-col gap-3 rounded-b-[14px] border-2 border-t-0 border-[#c9c9cb] pr-[22px] pl-5">
      <LogoBox>
        <svg viewBox="0 0 40 40" className="mr-4 mb-3 size-10" aria-hidden="true">
          <circle cx="20" cy="20" r="18" fill="none" stroke="#a3a7ab" strokeWidth="3" />
          <circle cx="20" cy="20" r="13" fill="none" stroke="#8f9498" strokeWidth="2" />
          <path d="M14 9v22M26 9v22M14 20h12" fill="none" stroke="#8f9498" strokeWidth="4" />
        </svg>
        <div className="mr-3 pt-1 text-center">
          <div className="font-['Roboto',sans-serif] text-[36px] leading-10 font-black text-[#ee1c25]">BOSCH</div>
          <div className="font-['Open_Sans',sans-serif] text-base leading-5 text-[#333]">Invented for life</div>
        </div>
      </LogoBox>
      <LogoBox>
        <svg viewBox="0 0 54 54" className="size-[54px]" aria-hidden="true">
          <circle cx="27" cy="27" r="25" fill="#fffaf2" stroke="#a04a2c" strokeWidth="2" strokeDasharray="6 2" />
          <circle cx="27" cy="27" r="19" fill="#f3cbab" />
          <g fill="none" stroke="#d07a52" strokeWidth="2">
            <path d="M12 20c5-10 24-11 30 0M14 34c6 11 22 10 27 0M19 18c-4 10 0 20 8 20s12-10 7-20" />
            <path d="M20 26c4-6 10-6 14 0M20 32c4 4 10 4 14 0M24 14l3 26M31 14l-6 24M12 27h8M34 27h8" />
            <path d="M13 15l28 24M41 15 13 39M17 10l20 34" strokeWidth="1" />
          </g>
        </svg>
        <span className="ml-1.5 font-['Liberation_Serif',serif] text-[46px] leading-none">iGATE</span>
      </LogoBox>
      <LogoBox>
        <svg viewBox="0 0 54 56" className="h-14 w-[54px]" aria-hidden="true">
          <path d="M30 1C-8 8-8 48 28 55 4 42 6 10 30 1z" fill="#1593d4" />
          <path d="M14 28C14 4 40-2 50 14 38 4 20 10 14 28z" fill="#1593d4" />
          <path d="M15 34c2-20 22-26 34-12-13-9-28-4-34 12z" fill="#4fb0e0" />
        </svg>
        <span className="mr-3 -ml-7 pt-4 font-['Open_Sans',sans-serif] text-[30px] leading-none font-bold text-[#f7931e] italic">Akamai</span>
      </LogoBox>
      <LogoBox>
        <div className="flex flex-col items-center pt-1">
          <svg viewBox="0 0 72 36" className="h-9 w-[72px]" aria-hidden="true">
            <path d="M2 28h18M18 28l9-12 8 12v7H18z" fill="#fff" stroke="#999" strokeWidth="2" />
            <path d="M31 27 45 2l6 2-2 7z" fill="#fbc81a" />
            <path d="M30 28 58 9l9 3-1 12-13 1-20 5z" fill="#d9301c" />
            <path d="M36 30h24v4l-14 1z" fill="#29a3dc" />
          </svg>
          <span className="font-['Open_Sans',sans-serif] text-[23px] leading-6 font-bold text-[#1b4468]">Mastek</span>
        </div>
      </LogoBox>
    </section>
  );
}

function LinkBox({ title, items, className }: { title: string; items: string[]; className: string }) {
  return (
    <section className={`rounded-[14px] border-2 border-[#c9c9cb] px-[9px] pt-[29px] ${className}`}>
      <h3 className="border-b-4 border-[#ffb81c] pb-2 text-center leading-8 font-bold">{title}</h3>
      <ul className="mt-[31px] flex flex-col gap-5 pr-4 pl-[18px]">
        {items.map((item) => (
          <li key={item} className="flex gap-3.5 leading-[30px]">
            <BulletIcon />
            <a href="#jobs">{item}</a>
          </li>
        ))}
      </ul>
    </section>
  );
}

export default function App() {
  return (
    <div className="flex h-screen flex-col overflow-hidden bg-white font-['DejaVu_Sans_Condensed','DejaVu_Sans',sans-serif] text-[22px] text-black">
      <TitleBar />
      <MenuBar />
      <ToolBar />
      <AddressBar />
      <div className="flex min-h-0 grow">
        <main className="grow overflow-hidden border-l-2 border-[#77766c] bg-[#fefefe] font-['Liberation_Sans',sans-serif] text-2xl">
          <div className="mx-auto flex min-h-full w-full max-w-[1544px] justify-between border-x-2 border-[#c9c9cb] pr-6 pl-5">
            <ResumeForm />
            <aside className="w-[316px] shrink-0">
              <EmployerLogos />
              <LinkBox title="Top Jobs in IT" items={TOP_JOBS} className="mt-[37px] h-[452px]" />
              <LinkBox title="Naukri.com helps you..." items={HELPS} className="mt-9" />
            </aside>
          </div>
        </main>
        <ScrollBar />
      </div>
      <StatusBar />
      <TaskBar />
    </div>
  );
}
